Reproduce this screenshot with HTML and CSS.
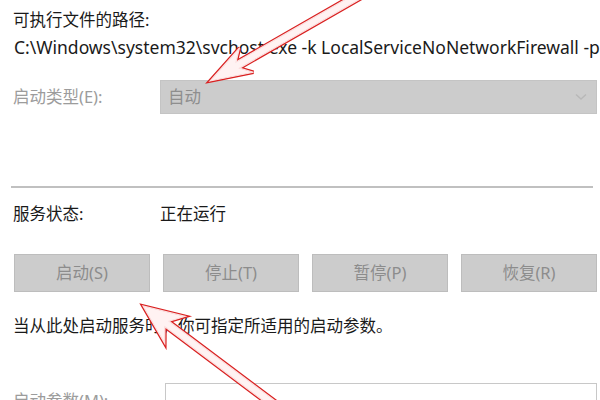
FILE: index.html
```html
<!DOCTYPE html>
<html lang="zh-CN">
<head>
<meta charset="utf-8">
<link rel="stylesheet" href="styles.css">
</head>
<body>
<div class="dialog">
  <div class="title">可执行文件的路径:</div>
  <div class="path">C:\Windows\system32\svchost.exe -k LocalServiceNoNetworkFirewall -p</div>
  <div class="field-row startup">
    <div class="label disabled">启动类型(E):</div>
    <div class="select">
      <span>自动</span>
      <svg class="chev" width="12" height="8" viewBox="0 0 12 8"><path d="M1 1.5 L6 6 L11 1.5" fill="none" stroke="#b8b8b8" stroke-width="1.4"/></svg>
    </div>
  </div>
  <div class="divider"></div>
  <div class="field-row status">
    <div class="label">服务状态:</div>
    <div class="value">正在运行</div>
  </div>
  <div class="buttons">
    <div class="btn">启动(S)</div>
    <div class="btn">停止(T)</div>
    <div class="btn">暂停(P)</div>
    <div class="btn">恢复(R)</div>
  </div>
  <div class="desc">当从此处启动服务时，你可指定所适用的启动参数。</div>
  <div class="field-row params">
    <div class="label disabled">启动参数(M):</div>
    <div class="input"></div>
  </div>
</div>
<svg class="annot" width="600" height="400" viewBox="0 0 600 400">
  <g transform="translate(210 81) rotate(150.2)">
    <polygon class="arrow-out" points="0,0 -42,-14 -32,-3.5 -185,-3.5 -185,3.5 -32,3.5 -42,14"/>
    <polygon class="arrow-in" points="0,0 -42,-14 -32,-3.5 -185,-3.5 -185,3.5 -32,3.5 -42,14"/>
  </g>
  <g transform="translate(143 306) rotate(-143.1)">
    <polygon class="arrow-out" points="0,0 -40,-17 -30,-3.5 -185,-3.5 -185,3.5 -30,3.5 -40,17"/>
    <polygon class="arrow-in" points="0,0 -40,-17 -30,-3.5 -185,-3.5 -185,3.5 -30,3.5 -40,17"/>
  </g>
</svg>
</body>
</html>
```

FILE: styles.css
```css
html, body {
  margin: 0;
  padding: 0;
  background: #ffffff;
  width: 600px;
  height: 400px;
  overflow: hidden;
}
.dialog {
  position: relative;
  padding: 8px 3px 0 13px;
  font-family: "Noto Sans", "Noto Sans CJK SC", sans-serif;
  font-size: 16.5px;
  line-height: 24px;
  color: #1a1a1a;
}
.title, .path, .desc {
  white-space: nowrap;
}
.path {
  margin-top: 3px;
  margin-left: 1px;
  font-size: 17.5px;
}
.field-row {
  display: flex;
  align-items: center;
}
.label {
  width: 147px;
  flex: none;
}
.disabled {
  color: #9c9c9c;
}
.startup {
  margin-top: 21px;
}
.select {
  flex: 1;
  height: 34px;
  background: #cccccc;
  border: 1px solid #c4c4c4;
  box-sizing: border-box;
  display: flex;
  align-items: center;
  justify-content: space-between;
  padding: 0 9px 0 7px;
  color: #8e8e8e;
}
.divider {
  margin: 72px 4px 0 -2px;
  height: 2px;
  background: #c0c0c0;
}
.status {
  margin-top: 14px;
}
.buttons {
  margin-top: 28px;
  margin-left: 1px;
  display: grid;
  grid-template-columns: repeat(4, 1fr);
  gap: 13px;
}
.btn {
  height: 38px;
  box-sizing: border-box;
  background: #cccccc;
  border: 1px solid #bdbdbd;
  color: #8c8c8c;
  display: flex;
  align-items: center;
  justify-content: center;
}
.desc {
  margin-top: 22px;
}
.params {
  margin-top: 45px;
  align-items: flex-start;
}
.params .label {
  width: 152px;
  margin-top: 6px;
}
.input {
  flex: 1;
  height: 40px;
  border: 1px solid #c8c8c8;
  box-sizing: border-box;
  background: #fff;
}
.annot {
  position: absolute;
  left: 0;
  top: 0;
  pointer-events: none;
}
.arrow-out {
  fill: none;
  stroke: #d92020;
  stroke-width: 3.6;
  stroke-linejoin: miter;
}
.arrow-in {
  fill: #fff2f2;
  stroke: #fbe0e0;
  stroke-width: 1.2;
}
```
